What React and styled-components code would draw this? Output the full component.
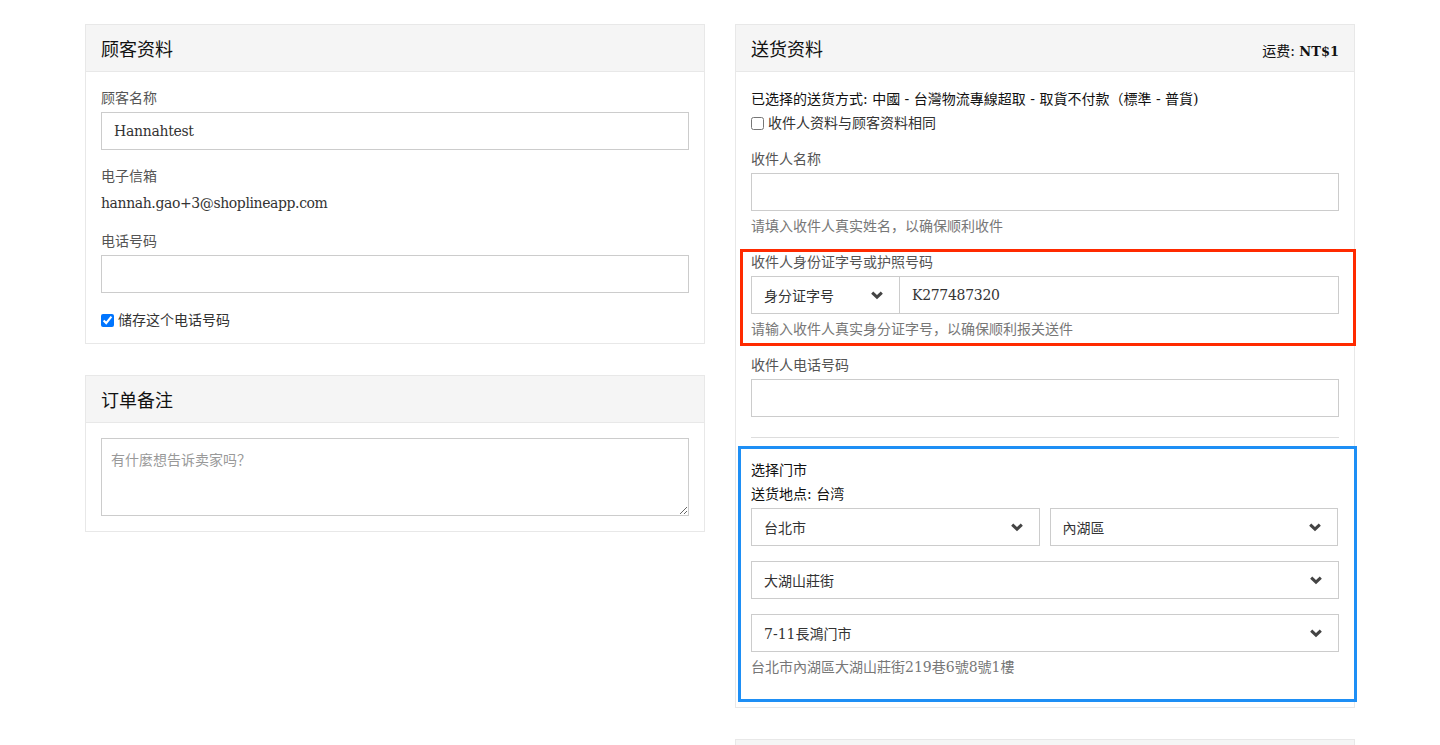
import React from "react";
import styled, { createGlobalStyle } from "styled-components";

const GlobalStyle = createGlobalStyle`
  html, body {
    margin: 0;
    padding: 0;
    background: #fff;
  }
  body {
    font-family: "DejaVu Serif", "Noto Sans CJK SC", serif;
    font-size: 14px;
    color: #333;
  }
  * {
    box-sizing: border-box;
  }
`;

const Page = styled.div`
  display: flex;
  justify-content: center;
  align-items: flex-start;
  gap: 30px;
  padding-top: 24px;
`;

const Column = styled.div`
  width: 620px;
  display: flex;
  flex-direction: column;
  gap: 31px;
`;

const Panel = styled.section`
  border: 1px solid #e8e8e8;
  background: #fff;
`;

const PanelHeader = styled.header`
  height: 47px;
  padding: 3px 15px 0;
  background: #f5f5f5;
  border-bottom: 1px solid #e8e8e8;
  display: flex;
  align-items: center;
  justify-content: space-between;
`;

const PanelTitle = styled.h3`
  margin: 0;
  font-size: 18px;
  font-weight: 400;
  color: #111;
  line-height: 24px;
`;

const Fee = styled.span`
  font-size: 14px;
  color: #111;
  b {
    font-size: 13px;
    font-weight: 700;
  }
`;

const PanelBody = styled.div`
  padding: ${(p) => p.$pad || "16px 15px 14px"};
`;

const Group = styled.div`
  margin-top: ${(p) => p.$mt || 0}px;
  margin-bottom: ${(p) => (p.$mb != null ? p.$mb : 16)}px;
`;

const Label = styled.label`
  display: block;
  line-height: 20px;
  margin-bottom: 4px;
  color: #555;
`;

const StaticText = styled.div`
  line-height: 20px;
  margin-top: 7px;
  color: #333;
  letter-spacing: -0.4px;
`;

const Input = styled.input`
  display: block;
  width: 100%;
  height: 38px;
  padding: 0 12px;
  border: 1px solid #ccc;
  border-radius: 0;
  font: inherit;
  font-size: 14px;
  letter-spacing: -0.3px;
  color: #333;
  outline: none;
  background: #fff;
`;

const TextArea = styled.textarea`
  display: block;
  width: 100%;
  height: 78px;
  padding: 10px 9px;
  border: 1px solid #ccc;
  border-radius: 0;
  font-family: "Noto Sans CJK SC", sans-serif;
  font-size: 14px;
  resize: vertical;
  outline: none;
  &::placeholder {
    color: #999;
  }
`;

const CheckLine = styled.label`
  display: flex;
  align-items: center;
  line-height: ${(p) => p.$lh || 20}px;
  color: #333;
  input {
    margin: 0 4px 0 0;
    width: 13px;
    height: 13px;
  }
`;

const InfoLine = styled.div`
  line-height: 24px;
  color: #111;
`;

const Help = styled.div`
  line-height: 20px;
  margin-top: 5px;
  color: #777;
`;

const Highlight = styled.div`
  border: 3px solid ${(p) => p.$color};
  margin: ${(p) => p.$margin};
  padding: ${(p) => p.$padding};
`;

const SelectBox = styled.div`
  flex: ${(p) => p.$flex || "1 1 0"};
  height: 38px;
  display: flex;
  align-items: center;
  justify-content: space-between;
  padding: 0 15px 0 12px;
  border: 1px solid #ccc;
  background: #fff;
  color: #333;
  cursor: pointer;
`;

const Chevron = styled.svg`
  width: 14px;
  height: 10px;
  flex: none;
  color: #444;
`;

const Row = styled.div`
  display: flex;
  gap: ${(p) => p.$gap || 0}px;
  margin-top: ${(p) => p.$mt || 0}px;
  padding-right: ${(p) => p.$pr || 0}px;
`;

const JoinedInput = styled(Input)`
  flex: 1;
  border-left: none;
`;

const Divider = styled.hr`
  border: none;
  border-top: 1px solid #ddd;
  margin: 20px 0 8px;
`;

const ChevronDown = () => (
  <Chevron viewBox="0 0 14 10" aria-hidden="true">
    <path
      d="M2.2 2.6 L7 7.2 L11.8 2.6"
      fill="none"
      stroke="currentColor"
      strokeWidth="3"
      strokeLinejoin="miter"
    />
  </Chevron>
);

const Select = ({ children, flex }) => (
  <SelectBox $flex={flex}>
    <span>{children}</span>
    <ChevronDown />
  </SelectBox>
);

export default function App() {
  return (
    <>
      <GlobalStyle />
      <Page>
        <Column>
          <Panel>
            <PanelHeader>
              <PanelTitle>顾客资料</PanelTitle>
            </PanelHeader>
            <PanelBody $pad="16px 15px 13px">
              <Group>
                <Label>顾客名称</Label>
                <Input defaultValue="Hannahtest" />
              </Group>
              <Group $mb={18}>
                <Label>电子信箱</Label>
                <StaticText>hannah.gao+3@shoplineapp.com</StaticText>
              </Group>
              <Group $mb={17}>
                <Label>电话号码</Label>
                <Input />
              </Group>
              <CheckLine>
                <input type="checkbox" defaultChecked />
                储存这个电话号码
              </CheckLine>
            </PanelBody>
          </Panel>

          <Panel>
            <PanelHeader>
              <PanelTitle>订单备注</PanelTitle>
            </PanelHeader>
            <PanelBody $pad="15px 15px 15px">
              <TextArea placeholder="有什麼想告诉卖家吗？" />
            </PanelBody>
          </Panel>
        </Column>

        <Column>
          <Panel>
            <PanelHeader>
              <PanelTitle>送货资料</PanelTitle>
              <Fee>
                运费: <b>NT$1</b>
              </Fee>
            </PanelHeader>
            <PanelBody $pad="15px 15px 5px">
              <InfoLine>已选择的送货方式: 中國 - 台灣物流專線超取 - 取貨不付款（標準 - 普貨)</InfoLine>
              <CheckLine $lh={24}>
                <input type="checkbox" />
                收件人资料与顾客资料相同
              </CheckLine>

              <Group $mt={14} $mb={13}>
                <Label>收件人名称</Label>
                <Input />
                <Help>请填入收件人真实姓名，以确保顺利收件</Help>
              </Group>

              <Highlight $color="#ff2a00" $margin="0 -17px 0 -11px" $padding="0 14px 4px 8px">
                <Label>收件人身份证字号或护照号码</Label>
                <Row>
                  <Select flex="0 0 149px">身分证字号</Select>
                  <JoinedInput defaultValue="K277487320" />
                </Row>
                <Help>请输入收件人真实身分证字号，以确保顺利报关送件</Help>
              </Highlight>

              <Group $mt={9} $mb={0}>
                <Label>收件人电话号码</Label>
                <Input />
              </Group>

              <Divider />

              <Highlight $color="#1e8ff5" $margin="0 -18px 0 -13px" $padding="9px 15px 22px 10px">
                <InfoLine>选择门市</InfoLine>
                <InfoLine>送货地点: 台湾</InfoLine>
                <Row $gap={10} $mt={2} $pr={1}>
                  <Select>台北市</Select>
                  <Select>內湖區</Select>
                </Row>
                <Row $mt={15}>
                  <Select>大湖山莊街</Select>
                </Row>
                <Row $mt={15}>
                  <Select>7-11長鴻门市</Select>
                </Row>
                <Help>台北市內湖區大湖山莊街219巷6號8號1樓</Help>
              </Highlight>
            </PanelBody>
          </Panel>

          <Panel>
            <PanelHeader />
            <PanelBody />
          </Panel>
        </Column>
      </Page>
    </>
  );
}
